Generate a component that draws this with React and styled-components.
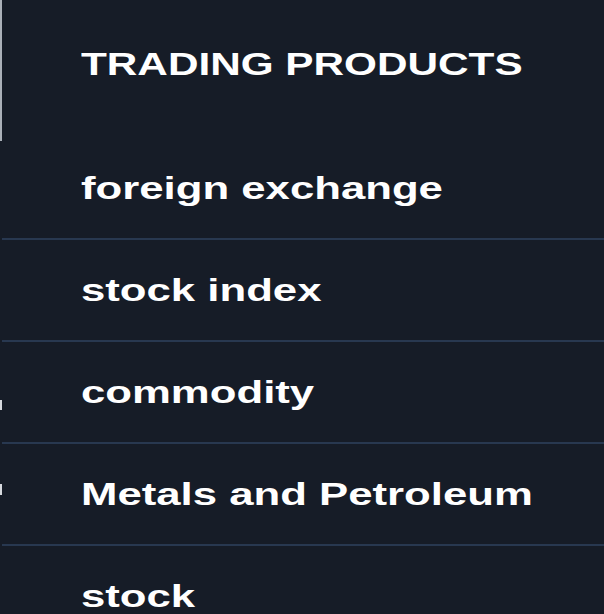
import styled, { createGlobalStyle } from 'styled-components';

const GlobalStyle = createGlobalStyle`
    html, body {
        margin: 0;
        padding: 0;
        background: #161c27;
    }
    * {
        box-sizing: border-box;
    }
`;

const colors = {
    background: '#161c27',
    divider: '#283850',
    text: '#ffffff',
    rail: '#aab0b8',
    tick: '#d6d9de',
};

const StyledMenu = styled.nav`
    position: relative;
    width: 604px;
    height: 614px;
    overflow: hidden;
    background: ${colors.background};
    font-family: "Liberation Sans", Arial, sans-serif;
    font-weight: 700;
    color: ${colors.text};
`;

const Rail = styled.div`
    position: absolute;
    left: 0;
    top: 0;
    width: 2px;
    height: 141px;
    background: ${colors.rail};
`;

const Tick = styled.div`
    position: absolute;
    left: 0;
    top: ${(p) => p.top}px;
    width: 2px;
    height: ${(p) => p.size}px;
    background: ${colors.tick};
`;

const Header = styled.div`
    height: 138px;
    padding: 0 0 10px 81px;
    display: flex;
    align-items: center;
`;

const List = styled.ul`
    list-style: none;
    margin: 0;
    padding: 0 0 0 2px;
`;

const Item = styled.li`
    height: 102px;
    padding: 0 0 0 79px;
    display: flex;
    align-items: center;
    border-bottom: 2px solid ${colors.divider};
`;

const Label = styled.span`
    display: inline-block;
    font-size: 31px;
    line-height: 1;
    white-space: nowrap;
    transform: scaleX(${(p) => (p.caps ? 1.364 : 1.41)});
    transform-origin: left center;
`;

const products = [
    'foreign exchange',
    'stock index',
    'commodity',
    'Metals and Petroleum',
    'stock',
];

function App() {
    return (
        <>
            <GlobalStyle />
            <StyledMenu>
                <Rail />
                <Tick top={400} size={10} />
                <Tick top={484} size={11} />
                <Header>
                    <Label caps>TRADING PRODUCTS</Label>
                </Header>
                <List>
                    {products.map((name) => (
                        <Item key={name}>
                            <Label>{name}</Label>
                        </Item>
                    ))}
                </List>
            </StyledMenu>
        </>
    );
}

export default App;
